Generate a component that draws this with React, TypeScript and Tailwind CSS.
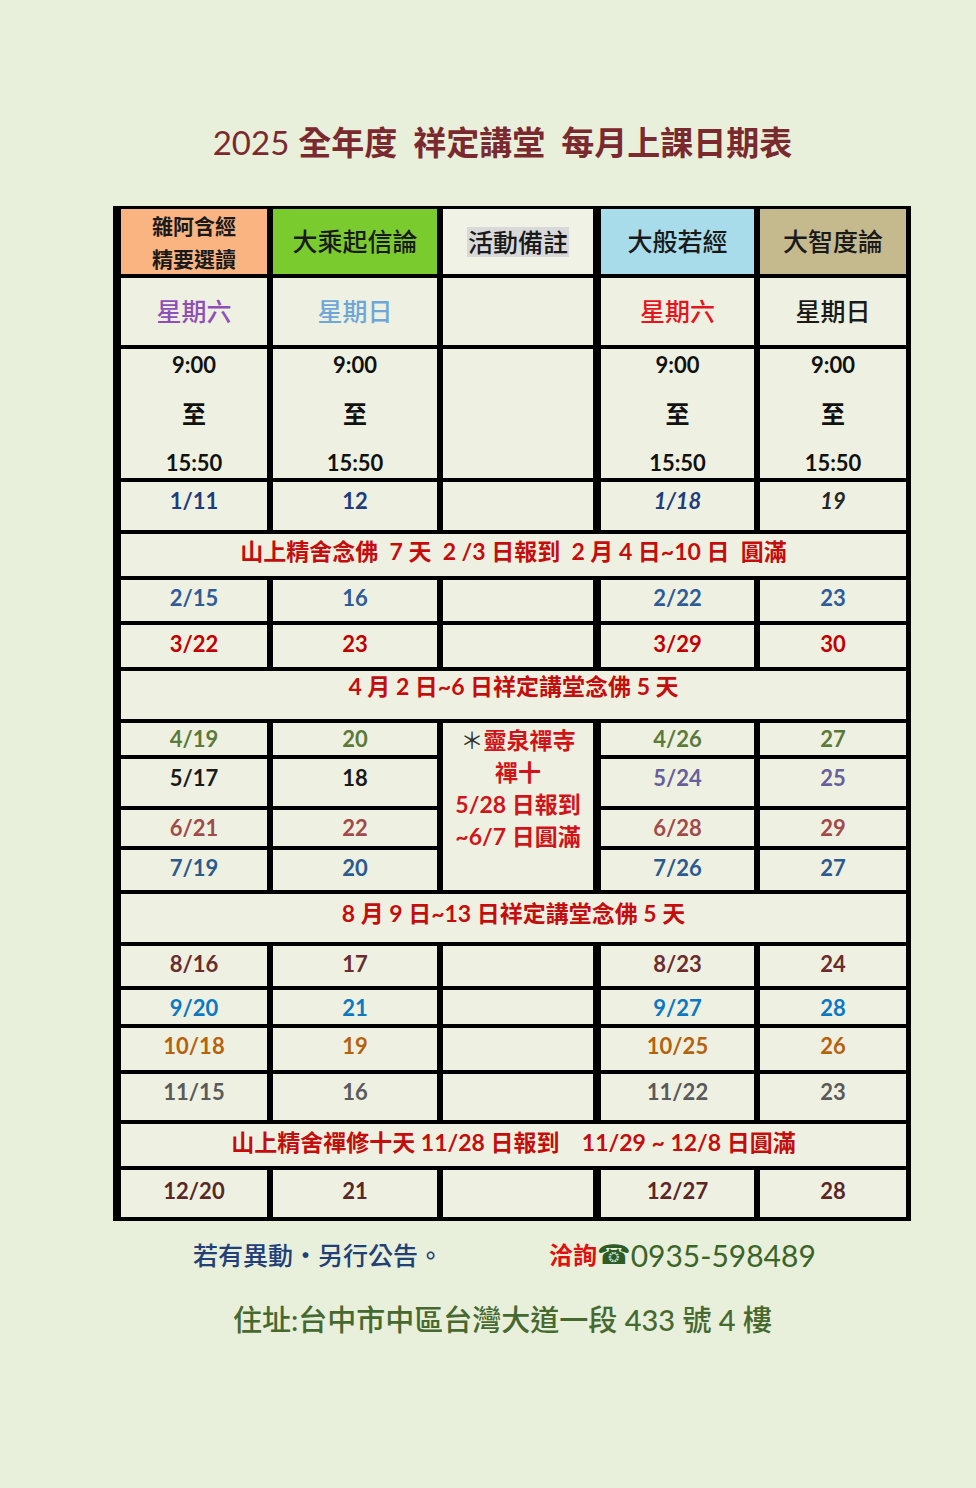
import type { ReactNode } from 'react';

type Row =
  | { kind: 'date'; cells: string[]; cls: string | string[]; pad: string; note?: boolean; skip?: boolean }
  | { kind: 'banner'; text: string; pad: string };

const ROWS: Row[] = [
  { kind: 'date', cells: ['1/11', '12', '', '1/18', '19'], cls: ['text-[#1f3c7c]', 'text-[#1f3c7c]', '', 'italic text-[#1f3c7c]', 'italic text-[#262626]'], pad: 'pb-[12px]' },
  { kind: 'banner', text: '山上精舍念佛  7 天  2 /3 日報到  2 月 4 日~10 日  圓滿', pad: 'pb-[8px]' },
  { kind: 'date', cells: ['2/15', '16', '', '2/22', '23'], cls: 'text-[#2e5c98]', pad: 'pb-[6px]' },
  { kind: 'date', cells: ['3/22', '23', '', '3/29', '30'], cls: 'text-[#c00000]', pad: 'pb-[5px]' },
  { kind: 'banner', text: '4 月 2 日~6 日祥定講堂念佛 5 天', pad: 'pb-[18px]' },
  { kind: 'date', cells: ['4/19', '20', '', '4/26', '27'], cls: ['text-[#5b7a39]', 'text-[#5b7a39]', '', 'text-[#5b7a39] text-[20px]', 'text-[#5b7a39] text-[19px]'], pad: 'pb-[1px]', note: true },
  { kind: 'date', cells: ['5/17', '18', '', '5/24', '25'], cls: ['text-[#1a1a1a]', 'text-[#1a1a1a]', '', 'text-[#665f9c]', 'text-[#665f9c]'], pad: 'pb-[11px]', skip: true },
  { kind: 'date', cells: ['6/21', '22', '', '6/28', '29'], cls: 'text-[#a04a4a] text-[20px]', pad: 'pb-[2px]', skip: true },
  { kind: 'date', cells: ['7/19', '20', '', '7/26', '27'], cls: 'text-[#2b5a8e]', pad: 'pb-[6px]', skip: true },
  { kind: 'banner', text: '8 月 9 日~13 日祥定講堂念佛 5 天', pad: 'pb-[10px]' },
  { kind: 'date', cells: ['8/16', '17', '', '8/23', '24'], cls: 'text-[#6a2c2c]', pad: 'pb-[6px]' },
  { kind: 'date', cells: ['9/20', '21', '', '9/27', '28'], cls: 'text-[#0a78c2]', pad: 'pb-[0px]' },
  { kind: 'date', cells: ['10/18', '19', '', '10/25', '26'], cls: 'text-[#b5620f]', pad: 'pb-[8px]' },
  { kind: 'date', cells: ['11/15', '16', '', '11/22', '23'], cls: 'text-[#5a5a5a]', pad: 'pb-[12px]' },
  { kind: 'banner', text: '山上精舍禪修十天 11/28 日報到    11/29 ~ 12/8 日圓滿', pad: 'pb-[6px]' },
  { kind: 'date', cells: ['12/20', '21', '', '12/27', '28'], cls: 'text-[#5a2626]', pad: 'pb-[6px]' },
];

function Cell({ children, className = '', bg = 'bg-[#eef1e1]', align = 'items-center' }: {
  children?: ReactNode; className?: string; bg?: string; align?: string;
}) {
  return <div className={`flex justify-center ${align} ${bg} ${className}`}>{children}</div>;
}

function Time() {
  return (
    <div className="flex flex-col items-center text-[22px] font-bold leading-[49px] text-[#111]">
      <span>9:00</span>
      <span className="text-[24px]">至</span>
      <span>15:50</span>
    </div>
  );
}

export default function App() {
  return (
    <div className="min-h-[1488px] w-full bg-[#e8efda] font-['Lato','Noto_Sans_CJK_TC',sans-serif]">
      <div className="w-[799px] ml-[112px] pt-[122px]">
        <h1 className="flex justify-center pr-[18px] text-[33px] leading-[40px] text-[#7a2a2e]">
          <span className="font-normal">2025</span>
          <span className="ml-[9px] font-bold">全年度</span>
          <span className="ml-[16px] font-bold">祥定講堂</span>
          <span className="ml-[16px] font-bold">每月上課日期表</span>
        </h1>

        <div className="mt-[44px] ml-[1px] grid w-[798px] grid-cols-[146px_164px_150px_155px_146px] grid-rows-[65px_67px_129px_48px_42px_41px_42px_48px_32px_47px_36px_40px_48px_40px_34px_42px_46px_42px_47px] gap-x-[6px] gap-y-[4px] bg-black pt-[3px] pl-[8px] pr-[5px] pb-[4px]">
          {/* header */}
          <Cell bg="bg-[#f9b482]" className="flex-col text-[21px] font-bold leading-[33px] text-[#1a1a1a]">
            <span>雜阿含經</span>
            <span>精要選讀</span>
          </Cell>
          <Cell bg="bg-[#7acc2e]" className="text-[25px] font-medium text-[#1a1a1a]">大乘起信論</Cell>
          <Cell bg="bg-[#f0f2e6]" className="text-[25px] font-medium text-[#1a1a1a]">
            <span className="bg-[#d9d9d9] px-[1px] leading-[30px]">活動備註</span>
          </Cell>
          <Cell bg="bg-[#a8dcea]" className="ml-[2px] text-[25px] font-medium text-[#1a1a1a]">大般若經</Cell>
          <Cell bg="bg-[#c5b98e]" className="text-[25px] font-medium text-[#1a1a1a]">大智度論</Cell>

          {/* weekday */}
          <Cell className="text-[25px] font-medium text-[#8e4fb8]">星期六</Cell>
          <Cell className="text-[25px] font-medium text-[#6fa6d8]">星期日</Cell>
          <Cell />
          <Cell className="ml-[2px] text-[25px] font-medium text-[#e8141c]">星期六</Cell>
          <Cell className="text-[25px] font-medium text-[#1a1a1a]">星期日</Cell>

          {/* time */}
          <Cell><Time /></Cell>
          <Cell><Time /></Cell>
          <Cell />
          <Cell className="ml-[2px]"><Time /></Cell>
          <Cell><Time /></Cell>

          {ROWS.map((r, ri) =>
            r.kind === 'banner' ? (
              <Cell key={ri} className={`col-span-5 whitespace-pre text-[23px] font-bold text-[#c40d0d] ${r.pad}`}>
                {r.text}
              </Cell>
            ) : (
              r.cells.map((v, i) => {
                if (i === 2 && r.skip) return null;
                if (i === 2 && r.note) {
                  return (
                    <Cell key={`${ri}-${i}`} align="items-center" className="row-span-4 flex-col justify-start pt-[1px] text-[23px] font-bold leading-[32px] text-[#d0141a]">
                      <span><span className="font-normal text-[#333]">＊</span>靈泉禪寺</span>
                      <span>禪十</span>
                      <span>5/28 日報到</span>
                      <span>~6/7 日圓滿</span>
                    </Cell>
                  );
                }
                const c = Array.isArray(r.cls) ? r.cls[i] : r.cls;
                return (
                  <Cell key={`${ri}-${i}`} className={`text-[22px] font-bold ${r.pad} ${i === 3 ? 'ml-[2px]' : ''} ${c}`}>
                    {v}
                  </Cell>
                );
              })
            )
          )}
        </div>

        <div className="mt-[16px] flex items-center pl-[81px] leading-[36px]">
          <span className="text-[25px] font-medium text-[#223f78]">若有異動・另行公告。</span>
          <span className="ml-[106px] text-[24px] font-bold text-[#e01010]">洽詢</span>
          <span className="text-[27px] text-[#2d5a25] font-['DejaVu_Sans',sans-serif]">☎</span>
          <span className="text-[30px] text-[#3a6428]">0935-598489</span>
        </div>

        <div className="mt-[27px] flex justify-center pr-[18px] text-[29px] font-medium leading-[40px] text-[#46692f]">
          住址:台中市中區台灣大道一段 433 號 4 樓
        </div>
      </div>
    </div>
  );
}
